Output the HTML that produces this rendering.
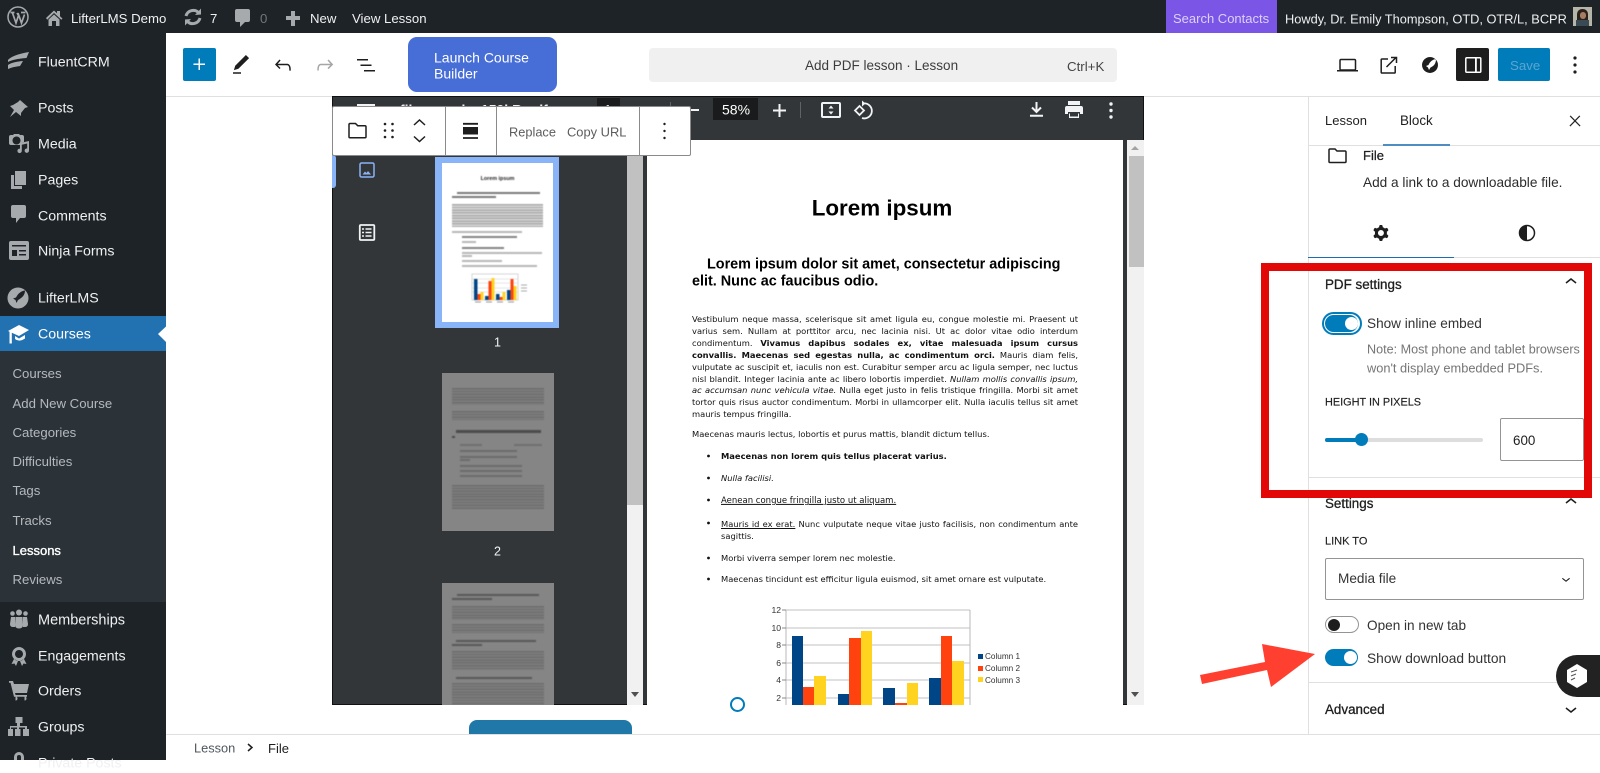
<!DOCTYPE html>
<html lang="en"><head><meta charset="utf-8"><title>Edit Lesson</title>
<style>
html,body{margin:0;padding:0;width:1600px;height:760px;overflow:hidden;background:#fff;font-family:"Liberation Sans",Arial,sans-serif;color:#1e1e1e}
.a{position:absolute}
.t{position:absolute;white-space:nowrap;line-height:1.2;transform:translateY(-50%)}
.ad{font-size:13.2px;color:#f0f0f1;top:19px}
.m{font-size:14.2px;color:#f0f0f1;left:38px}
.s{font-size:13.2px;color:#b4b9be;left:12.5px}
.r{font-size:13.6px;color:#1e1e1e}
.h{font-size:13.4px;color:#1e1e1e;-webkit-text-stroke:.3px #1e1e1e}
.p{font-family:"DejaVu Sans",sans-serif;font-size:8.35px;color:#111;left:692px}
.j{width:386px;white-space:normal;text-align:justify;text-align-last:justify}
.b{position:absolute;background:#333;opacity:.55}
.bl{filter:blur(.5px)}
</style></head><body>

<!-- admin bar -->
<div class="a" style="left:0;top:0;width:1600px;height:33px;background:#1d2327"></div>
<div class="a" style="left:1166px;top:0;width:111px;height:33px;background:#7b55e6"></div>
<div class="a" style="left:1573px;top:7px;width:19px;height:19px;background:#b7b4a8;overflow:hidden"><div class="a" style="left:4px;top:2px;width:11px;height:17px;border-radius:5px;background:#2a211d"></div><div class="a" style="left:6.500px;top:5px;width:6px;height:7px;border-radius:3px;background:#a87c62"></div><div class="a" style="left:3px;top:13px;width:13px;height:6px;background:#3a4a55"></div></div>

<!-- sidebar -->
<div class="a" style="left:0;top:33px;width:166px;height:727px;background:#1d2327"></div>
<div class="a" style="left:0;top:351px;width:166px;height:251px;background:#2c3338"></div>
<div class="a" style="left:0;top:316px;width:166px;height:35px;background:#2271b1"></div>

<!-- top bar/status lines -->
<div class="a" style="left:166px;top:96px;width:1434px;height:1px;background:#e0e0e0"></div>
<div class="a" style="left:166px;top:734px;width:1434px;height:1px;background:#e0e0e0"></div>
<div class="a" style="left:183px;top:48px;width:33px;height:33px;background:#007cba;border-radius:2px"></div>
<div class="a" style="left:408px;top:37px;width:149px;height:55px;background:#476dd6;border-radius:9px"></div>
<div class="a" style="left:649px;top:48px;width:468px;height:34px;background:#f0f0f0;border-radius:4px"></div>
<div class="a" style="left:1456px;top:48px;width:33px;height:33px;background:#1e1e1e;border-radius:2px"></div>
<div class="a" style="left:1498px;top:48px;width:52px;height:33px;background:#007cba;border-radius:2px"></div>

<!-- PDF frame -->
<div class="a" style="left:332px;top:96px;width:812px;height:609px;background:#323639;box-shadow:inset 0 0 0 1px #111"></div>
<div class="a" style="left:627px;top:140px;width:16px;height:565px;background:#f1f1f1"></div>
<div class="a" style="left:627px;top:156px;width:16px;height:349px;background:#c1c1c1"></div>
<div class="a" style="left:647px;top:140px;width:476px;height:565px;background:#fff"></div>
<div class="a" style="left:1127px;top:140px;width:17px;height:565px;background:#f1f1f1"></div>
<div class="a" style="left:1129px;top:156px;width:15px;height:111px;background:#c1c1c1"></div>
<div class="a" style="left:713px;top:98px;width:45px;height:22px;background:#191b1c"></div>
<div class="a" style="left:597px;top:98px;width:23px;height:22px;background:#191b1c"></div>
<div class="a" style="left:332px;top:155px;width:4px;height:33px;background:#8ab4f8;border-radius:0 3px 3px 0"></div>

<!-- thumb 1 -->
<div class="a" style="left:435px;top:157px;width:124px;height:171px;background:#8ab4f8"></div>
<div class="a" style="left:442px;top:163px;width:111px;height:159px;background:#fff;overflow:hidden">
  <div class="bl a" style="left:0;top:0;width:111px;height:159px">
  <div class="t" style="left:0;width:111px;text-align:center;top:16px;font-weight:bold;font-size:5.4px;color:#222">Lorem ipsum</div>
  <div class="b" style="left:15px;top:29px;width:83px;height:2px;opacity:.65"></div>
  <div class="b" style="left:10px;top:33px;width:44px;height:2px;opacity:.65"></div>
  <div class="b" style="left:10px;top:41px;width:91px;height:23px;background:repeating-linear-gradient(#aaa 0 1.4px,#d8d8d8 1.4px 2.75px);opacity:1"></div>
  <div class="b" style="left:10px;top:68px;width:70px;height:1.5px;opacity:.35"></div>
  <div class="b" style="left:20px;top:73px;width:55px;height:1.5px;opacity:.6"></div>
  <div class="b" style="left:20px;top:78px;width:14px;height:1.5px;opacity:.35"></div>
  <div class="b" style="left:20px;top:84px;width:42px;height:2px;opacity:.6"></div>
  <div class="b" style="left:20px;top:89px;width:80px;height:1.5px;opacity:.35"></div>
  <div class="b" style="left:20px;top:92px;width:10px;height:1.5px;opacity:.35"></div>
  <div class="b" style="left:20px;top:97px;width:40px;height:1.5px;opacity:.35"></div>
  <div class="b" style="left:20px;top:102px;width:75px;height:1.5px;opacity:.35"></div>
  <svg class="a" style="left:0;top:0" width="111" height="159" viewBox="0 0 111 159">
    <rect x="30" y="111" width="46" height="26" fill="#fff" stroke="#bbb" stroke-width=".6"/>
    <path d="M30 116h46M30 120h46M30 125h46M30 129h46" stroke="#ccc" stroke-width=".5"/>
    <g fill="#004586"><rect x="32" y="116" width="3.500" height="21"/><rect x="43" y="133" width="3.500" height="4"/><rect x="54" y="131" width="3.500" height="6"/><rect x="65" y="127" width="3.500" height="10"/></g>
    <g fill="#ff420e"><rect x="35.500" y="131" width="3" height="6"/><rect x="46.500" y="118" width="3" height="19"/><rect x="57.500" y="134" width="3" height="3"/><rect x="68.500" y="116" width="3" height="21"/></g>
    <g fill="#ffd320"><rect x="38.500" y="129" width="3" height="8"/><rect x="49.500" y="115" width="3" height="22"/><rect x="60.500" y="129" width="3" height="8"/><rect x="71.500" y="123" width="3" height="14"/></g>
    <path d="M33 139h6M44 139h6M55 139h6M66 139h6" stroke="#999" stroke-width="1"/>
    <path d="M79 122h6M79 125h6M79 128h6" stroke="#aaa" stroke-width="1"/>
  </svg>
  </div>
</div>
<div class="t" style="left:494px;top:343px;font-size:12.5px;color:#f1f3f4">1</div>

<!-- thumb 2 -->
<div class="a" style="left:442px;top:373px;width:112px;height:158px;background:#858585;overflow:hidden">
  <div class="bl a" style="left:0;top:0;width:112px;height:158px">
  <div class="b" style="left:10px;top:15px;width:92px;height:17px;background:repeating-linear-gradient(#6e6e6e 0 1.4px,#7d7d7d 1.4px 2.8px);opacity:1"></div>
  <div class="b" style="left:10px;top:38px;width:92px;height:9px;background:repeating-linear-gradient(#6e6e6e 0 1.4px,#7d7d7d 1.4px 2.8px);opacity:1"></div>
  <div class="b" style="left:14px;top:57px;width:85px;height:2.500px;opacity:.7"></div>
  <div class="b" style="left:10px;top:63px;width:3px;height:2px;opacity:.7"></div>
  <div class="b" style="left:18px;top:71px;width:22px;height:1.5px;opacity:.25"></div><div class="b" style="left:72px;top:71px;width:28px;height:1.5px;opacity:.25"></div>
  <div class="b" style="left:18px;top:77px;width:57px;height:1.5px;opacity:.3"></div>
  <div class="b" style="left:18px;top:83px;width:57px;height:1.5px;opacity:.3"></div>
  <div class="b" style="left:18px;top:86px;width:10px;height:1.5px;opacity:.3"></div>
  <div class="b" style="left:18px;top:92px;width:62px;height:1.5px;opacity:.3"></div>
  <div class="b" style="left:18px;top:97px;width:62px;height:1.5px;opacity:.3"></div>
  <div class="b" style="left:18px;top:102px;width:62px;height:1.5px;opacity:.3"></div>
  <div class="b" style="left:10px;top:112px;width:92px;height:24px;background:repeating-linear-gradient(#6e6e6e 0 1.4px,#7d7d7d 1.4px 2.8px);opacity:1"></div>
  </div>
</div>
<div class="t" style="left:494px;top:552px;font-size:12.5px;color:#f1f3f4">2</div>

<!-- thumb 3 -->
<div class="a" style="left:442px;top:583px;width:112px;height:122px;background:#858585;overflow:hidden">
  <div class="bl a" style="left:0;top:0;width:112px;height:122px">
  <div class="b" style="left:15px;top:11px;width:82px;height:2px"></div><div class="b" style="left:10px;top:15px;width:40px;height:2px"></div>
  <div class="b" style="left:10px;top:23px;width:92px;height:14px;background:repeating-linear-gradient(#6e6e6e 0 1.4px,#7d7d7d 1.4px 2.8px);opacity:1"></div>
  <div class="b" style="left:10px;top:41px;width:92px;height:9px;background:repeating-linear-gradient(#6e6e6e 0 1.4px,#7d7d7d 1.4px 2.8px);opacity:1"></div>
  <div class="b" style="left:14px;top:57px;width:80px;height:2px"></div><div class="b" style="left:10px;top:61px;width:30px;height:2px"></div>
  <div class="b" style="left:10px;top:68px;width:92px;height:19px;background:repeating-linear-gradient(#6e6e6e 0 1.4px,#7d7d7d 1.4px 2.8px);opacity:1"></div>
  <div class="b" style="left:14px;top:94px;width:76px;height:2px"></div>
  <div class="b" style="left:10px;top:100px;width:92px;height:22px;background:repeating-linear-gradient(#6e6e6e 0 1.4px,#7d7d7d 1.4px 2.8px);opacity:1"></div>
  </div>
</div>

<!-- PDF toolbar text (clipped beneath block toolbar) -->
<div class="t" style="left:400px;top:110px;font-size:14px;color:#f1f3f4;font-weight:bold">file-sample_150kB.pdf</div>
<div class="t" style="left:604px;top:110px;font-size:14px;color:#f1f3f4">1</div>
<div class="t" style="left:722px;top:110px;font-size:14px;color:#fff">58%</div>

<!-- PDF page -->
<div class="t" style="left:647px;width:470px;text-align:center;top:209px;font-size:22.4px;font-weight:bold;color:#000">Lorem ipsum</div>
<div class="t" style="left:707px;top:265px;font-size:14.4px;font-weight:bold;color:#000">Lorem ipsum dolor sit amet, consectetur adipiscing</div>
<div class="t" style="left:692px;top:282px;font-size:14.4px;font-weight:bold;color:#000">elit. Nunc ac faucibus odio.</div>

<div class="t p j" style="top:319px">Vestibulum neque massa, scelerisque sit amet ligula eu, congue molestie mi. Praesent ut</div>
<div class="t p j" style="top:331px">varius sem. Nullam at porttitor arcu, nec lacinia nisi. Ut ac dolor vitae odio interdum</div>
<div class="t p j" style="top:343px">condimentum. <b>Vivamus dapibus sodales ex, vitae malesuada ipsum cursus</b></div>
<div class="t p j" style="top:355px"><b>convallis. Maecenas sed egestas nulla, ac condimentum orci.</b> Mauris diam felis,</div>
<div class="t p j" style="top:367px">vulputate ac suscipit et, iaculis non est. Curabitur semper arcu ac ligula semper, nec luctus</div>
<div class="t p j" style="top:379px">nisl blandit. Integer lacinia ante ac libero lobortis imperdiet. <i>Nullam mollis convallis ipsum,</i></div>
<div class="t p j" style="top:390px"><i>ac accumsan nunc vehicula vitae.</i> Nulla eget justo in felis tristique fringilla. Morbi sit amet</div>
<div class="t p j" style="top:402px">tortor quis risus auctor condimentum. Morbi in ullamcorper elit. Nulla iaculis tellus sit amet</div>
<div class="t p" style="top:414px">mauris tempus fringilla.</div>
<div class="t p" style="top:434px">Maecenas mauris lectus, lobortis et purus mattis, blandit dictum tellus.</div>
<div class="t p" style="left:721px;top:456px"><b>Maecenas non lorem quis tellus placerat varius.</b></div>
<div class="t p" style="left:721px;top:478px"><i>Nulla facilisi.</i></div>
<div class="t p" style="left:721px;top:501px;font-size:8.5px"><u>Aenean congue fringilla justo ut aliquam. </u></div>
<div class="t p" style="left:721px;top:524px;width:357px;white-space:normal;text-align:justify;text-align-last:justify"><u>Mauris id ex erat.</u> Nunc vulputate neque vitae justo facilisis, non condimentum ante</div>
<div class="t p" style="left:721px;top:536px">sagittis.</div>
<div class="t p" style="left:721px;top:558px">Morbi viverra semper lorem nec molestie.</div>
<div class="t p" style="left:721px;top:579px">Maecenas tincidunt est efficitur ligula euismod, sit amet ornare est vulputate.</div>

<svg class="a" style="left:0;top:0" width="1600" height="760" viewBox="0 0 1600 760">
  <!-- bullets -->
  <g fill="#111"><circle cx="708.5" cy="456" r="1.4"/><circle cx="708.5" cy="478" r="1.4"/><circle cx="708.5" cy="500" r="1.4"/><circle cx="708.5" cy="523" r="1.4"/><circle cx="708.5" cy="558" r="1.4"/><circle cx="708.5" cy="579" r="1.4"/></g>
  <!-- chart -->
  <path d="M786 610H970M786 628H970M786 645H970M786 663H970M786 680H970M786 698H970" stroke="#c0c0c0" stroke-width="1"/>
  <path d="M786 610V705M970 610V705" stroke="#b8b8b8" stroke-width="1"/>
  <path d="M782 610H786M782 628H786M782 645H786M782 663H786M782 680H786M782 698H786" stroke="#888"/>
  <g fill="#004586"><rect x="792" y="636" width="11" height="69"/><rect x="838" y="694" width="11" height="11"/><rect x="883" y="688" width="12" height="17"/><rect x="929" y="678" width="12" height="27"/></g>
  <g fill="#ff420e"><rect x="803" y="687" width="11" height="18"/><rect x="849" y="638" width="12" height="67"/><rect x="895" y="703" width="12" height="2"/><rect x="941" y="636" width="11" height="69"/></g>
  <g fill="#ffd320"><rect x="814" y="676" width="12" height="29"/><rect x="861" y="631" width="11" height="74"/><rect x="907" y="683" width="11" height="22"/><rect x="952" y="661" width="12" height="44"/></g>
  <g font-family="Liberation Sans" font-size="8.6" fill="#333" text-anchor="end"><text x="781" y="613">12</text><text x="781" y="631">10</text><text x="781" y="648">8</text><text x="781" y="666">6</text><text x="781" y="683">4</text><text x="781" y="701">2</text></g>
  <rect x="978" y="654" width="5" height="5" fill="#004586"/><rect x="978" y="666" width="5" height="5" fill="#ff420e"/><rect x="978" y="677" width="5" height="5" fill="#ffd320"/>
  <g font-family="Liberation Sans" font-size="8.2" fill="#333"><text x="985" y="659">Column 1</text><text x="985" y="671">Column 2</text><text x="985" y="683">Column 3</text></g>
  <!-- scrollbar arrows -->
  <path d="M631 150l4-5 4 5zM631 692l4 5 4-5z" fill="#505050"/>
  <path d="M1131 150l4-4 4 4z" fill="#a3a3a3"/>
  <path d="M1131 692l4 5 4-5z" fill="#505050"/>
  <!-- PDF toolbar icons -->
  <path d="M357 105h18M357 110h18" stroke="#f1f3f4" stroke-width="2"/>
  <rect x="690" y="109" width="9" height="2" fill="#f1f3f4"/>
  <path d="M773 110.500h13M779.500 104v13" stroke="#f1f3f4" stroke-width="2"/>
  <path d="M670.500 102v16M800.500 102v16" stroke="#5f6368"/>
  <rect x="822" y="103" width="18" height="14" rx="1" fill="none" stroke="#f1f3f4" stroke-width="2"/>
  <path d="M828.500 108.500l2.500-3 2.500 3zM828.500 111.500l2.500 3 2.500-3z" fill="#f1f3f4"/>
  <g fill="none" stroke="#f1f3f4" stroke-width="1.800"><path d="M855 110.500l4.500-4.500 4.500 4.500-4.500 4.500z"/><path d="M863 103.500a7.500 7.500 0 1 1-1 14.500"/></g>
  <path d="M862 100.500l3.500 3-3.500 3z" fill="#f1f3f4"/>
  <path d="M1036.500 102v9M1032 107.500l4.500 4.500 4.500-4.500M1030 115.800h13" fill="none" stroke="#f1f3f4" stroke-width="2"/>
  <path d="M1068 101h12v4h-12zM1067 106h14a2 2 0 0 1 2 2v6h-3v-2h-12v2h-3v-6a2 2 0 0 1 2-2zM1069 113.500h10v4.500h-10z" fill="#f1f3f4"/>
  <rect x="1070" y="113" width="8" height="3.500" fill="#323639"/>
  <g fill="#f1f3f4"><circle cx="1111" cy="104" r="1.700"/><circle cx="1111" cy="110.500" r="1.700"/><circle cx="1111" cy="117" r="1.700"/></g>
  <!-- pdf side icons -->
  <rect x="360" y="163" width="14" height="14" rx="1.500" fill="none" stroke="#8ab4f8" stroke-width="1.500"/>
  <path d="M362.500 174.500l2.500-3 1.500 1.500 1.500-2 3 3.500z" fill="#8ab4f8"/>
  <rect x="359.800" y="225" width="14.500" height="15" rx="1" fill="none" stroke="#f1f3f4" stroke-width="1.800"/>
  <path d="M362 229h2M365.500 229h6M362 232.500h2M365.500 232.500h6M362 236h2M365.500 236h6" stroke="#f1f3f4" stroke-width="1.500"/>
</svg>

<!-- spinner & button peek -->
<div class="a" style="left:469px;top:720px;width:163px;height:14px;background:#1f78a8;border-radius:8px 8px 0 0"></div>
<div class="a" style="left:730px;top:697px;width:11px;height:11px;border:2.500px solid #007cba;border-radius:50%;background:#fff;box-sizing:content-box"></div>

<!-- block toolbar -->
<div class="a" style="left:332px;top:106px;width:357px;height:48px;background:#fff;border:1px solid #8a8a8a;border-radius:2px"></div>
<div class="a" style="left:445px;top:106px;width:1px;height:50px;background:#8a8a8a"></div>
<div class="a" style="left:496px;top:106px;width:1px;height:50px;background:#8a8a8a"></div>
<div class="a" style="left:639px;top:106px;width:1px;height:50px;background:#8a8a8a"></div>
<div class="t" style="left:509px;top:131.500px;font-size:12.800px;color:#5c5c5c">Replace</div>
<div class="t" style="left:567px;top:131.500px;font-size:12.900px;color:#5c5c5c">Copy URL</div>

<!-- admin text -->
<div class="t ad" style="left:71px">LifterLMS Demo</div>
<div class="t ad" style="left:210px">7</div>
<div class="t ad" style="left:260px;color:#70777c">0</div>
<div class="t ad" style="left:310px">New</div>
<div class="t ad" style="left:352px">View Lesson</div>
<div class="t ad" style="left:1173px;color:#dcd2fa;font-size:13px">Search Contacts</div>
<div class="t ad" style="left:1285px;font-size:12.800px">Howdy, Dr. Emily Thompson, OTD, OTR/L, BCPR</div>

<!-- sidebar text -->
<div class="t m" style="top:63px">FluentCRM</div>
<div class="t m" style="top:109px">Posts</div>
<div class="t m" style="top:145px">Media</div>
<div class="t m" style="top:181px">Pages</div>
<div class="t m" style="top:217px">Comments</div>
<div class="t m" style="top:252px">Ninja Forms</div>
<div class="t m" style="top:299px">LifterLMS</div>
<div class="t m" style="top:335px;color:#fff">Courses</div>
<div class="t s" style="top:374px">Courses</div>
<div class="t s" style="top:404px">Add New Course</div>
<div class="t s" style="top:433px">Categories</div>
<div class="t s" style="top:462px">Difficulties</div>
<div class="t s" style="top:491px">Tags</div>
<div class="t s" style="top:521px">Tracks</div>
<div class="t s" style="top:551px;color:#fff;font-size:13px;-webkit-text-stroke:.35px #fff">Lessons</div>
<div class="t s" style="top:580px">Reviews</div>
<div class="t m" style="top:621px;font-size:14.500px">Memberships</div>
<div class="t m" style="top:657px">Engagements</div>
<div class="t m" style="top:692px">Orders</div>
<div class="t m" style="top:728px">Groups</div>
<div class="t m" style="top:764px">Private Posts</div>

<!-- top bar text -->
<div class="t" style="left:434px;top:58px;font-size:14px;color:#fff">Launch Course</div>
<div class="t" style="left:434px;top:73.500px;font-size:14px;color:#fff">Builder</div>
<div class="t" style="left:805px;top:66px;font-size:13.500px;color:#3c3c3c">Add PDF lesson · Lesson</div>
<div class="t" style="left:1067px;top:67px;font-size:13.300px;color:#444">Ctrl+K</div>
<div class="t" style="left:1510px;top:66px;font-size:13.300px;color:#5aa5cf">Save</div>

<!-- status -->
<div class="t" style="left:194px;top:748px;font-size:12.800px;color:#50575e">Lesson</div>
<div class="t" style="left:268px;top:749px;font-size:13px;color:#1e1e1e">File</div>

<!-- right sidebar -->
<div class="a" style="left:1308px;top:97px;width:1px;height:637px;background:#e0e0e0"></div>
<div class="a" style="left:1309px;top:145px;width:291px;height:1px;background:#e0e0e0"></div>
<div class="a" style="left:1383px;top:144px;width:67px;height:2px;background:#4f8cc0"></div>
<div class="a" style="left:1309px;top:257px;width:291px;height:1px;background:#e0e0e0"></div>
<div class="a" style="left:1308px;top:256.500px;width:146px;height:1.500px;background:#1e6bb0"></div>
<div class="a" style="left:1308px;top:477px;width:292px;height:1px;background:#e0e0e0"></div>
<div class="a" style="left:1308px;top:682px;width:292px;height:1px;background:#e0e0e0"></div>

<div class="t r" style="left:1325px;top:121px;font-size:13px">Lesson</div>
<div class="t r" style="left:1400px;top:121px;font-size:13.400px">Block</div>
<div class="t r" style="left:1363px;top:156px;font-size:13px;-webkit-text-stroke:.25px #1e1e1e">File</div>
<div class="t r" style="left:1363px;top:183px;font-size:13.650px;color:#2c2c2c">Add a link to a downloadable file.</div>

<div class="t h" style="left:1325px;top:285px">PDF settings</div>
<div class="t r" style="left:1367px;top:324px;color:#333">Show inline embed</div>
<div class="t r" style="left:1367px;top:350px;font-size:12.600px;color:#757575">Note: Most phone and tablet browsers</div>
<div class="t r" style="left:1367px;top:368px;font-size:12.800px;color:#757575">won't display embedded PDFs.</div>
<div class="t r" style="left:1325px;top:403px;font-size:10.900px;-webkit-text-stroke:.15px #1e1e1e">HEIGHT IN PIXELS</div>
<div class="a" style="left:1325px;top:437.500px;width:158px;height:4px;background:#ddd;border-radius:2px"></div>
<div class="a" style="left:1325px;top:437.500px;width:36px;height:4px;background:#007cba;border-radius:2px"></div>
<div class="a" style="left:1355px;top:433px;width:13px;height:13px;background:#007cba;border-radius:50%"></div>
<div class="a" style="left:1500px;top:418px;width:82px;height:41px;border:1px solid #949494;border-radius:2px;background:#fff"></div>
<div class="t r" style="left:1513px;top:441px;font-size:13.400px">600</div>

<div class="t h" style="left:1325px;top:504px">Settings</div>
<div class="t r" style="left:1325px;top:542px;font-size:11px;-webkit-text-stroke:.15px #1e1e1e">LINK TO</div>
<div class="a" style="left:1325px;top:558px;width:257px;height:40px;border:1px solid #949494;border-radius:2px;background:#fff"></div>
<div class="t r" style="left:1338px;top:579px;color:#333">Media file</div>
<div class="t r" style="left:1367px;top:626px;color:#333">Open in new tab</div>
<div class="t r" style="left:1367px;top:659px;color:#333;font-size:13.750px">Show download button</div>
<div class="t h" style="left:1325px;top:710px">Advanced</div>

<!-- toggles -->
<div class="a" style="left:1322px;top:312px;width:36px;height:19px;border:2px solid #007cba;border-radius:12px;background:#fff"></div>
<div class="a" style="left:1325px;top:315px;width:33px;height:17px;background:#007cba;border-radius:9px"></div>
<div class="a" style="left:1344.500px;top:317px;width:13px;height:13px;background:#fff;border-radius:50%"></div>
<div class="a" style="left:1325px;top:616px;width:32px;height:15px;border:1px solid #949494;border-radius:9px;background:#fff"></div>
<div class="a" style="left:1327.500px;top:618.500px;width:12px;height:12px;background:#1e1e1e;border-radius:50%"></div>
<div class="a" style="left:1325px;top:649px;width:33px;height:17px;background:#007cba;border-radius:9px"></div>
<div class="a" style="left:1344px;top:651px;width:13px;height:13px;background:#fff;border-radius:50%"></div>

<!-- red box -->
<div class="a" style="left:1261px;top:263px;width:315px;height:219px;border:8px solid #e30808"></div>

<!-- widget -->
<div class="a" style="left:1556px;top:655px;width:44px;height:42px;background:#222;border-radius:21px 0 0 21px"></div>

<!-- icon layer -->
<svg class="a" style="left:0;top:0" width="1600" height="760" viewBox="0 0 1600 760">
  <!-- admin icons -->
  <circle cx="18" cy="17" r="10" fill="none" stroke="#a7aaad" stroke-width="1.500"/>
  <path d="M10.500 12.500h4M21 12.500h4.500M12.500 13l3.500 10 2.500-7.500-1.500-2.500M18 13l3.500 10 3-8.500" fill="none" stroke="#a7aaad" stroke-width="1.700"/>
  <path d="M46 18l8-7.500 3 2.800V11h3v5.200l2.500 2.300-1.200 1.200L54 13l-6.800 6.700zM48.500 19.500L54 14.500l5.500 5V26H56v-5h-4v5h-3.500z" fill="#a7aaad"/>
  <path d="M186 16a7.500 7.500 0 0 1 12.500-3.500M200 18a7.500 7.500 0 0 1-12.500 3.500" fill="none" stroke="#a7aaad" stroke-width="3"/>
  <path d="M195 15l6-.5v-6zM191 19l-6 .5v6z" fill="#a7aaad"/>
  <path d="M237 9h11a2 2 0 0 1 2 2v9a2 2 0 0 1-2 2h-3l-5 5v-5h-3a2 2 0 0 1-2-2v-9a2 2 0 0 1 2-2z" fill="#a7aaad"/>
  <path d="M291 11h4v5h5v4h-5v6h-4v-6h-5v-4h5z" fill="#a7aaad"/>

  <!-- sidebar icons -->
  <g fill="#a7aaad">
    <path d="M8 60q4-5 21-8l-2.500 6q-13 1-18.500 4zM8 65q4-3 15-4l-3 5q-8 1-12 3z"/>
    <path d="M20 100l8 7-3 1-4 5v3l-5-4-6 5 4-7-4-4 3-1 5-3z"/>
    <path d="M9 137a2 2 0 0 1 2-2h2l1-1h5l1 1h2a2 2 0 0 1 2 2v5l-4 1v2h-9a2 2 0 0 1-2-2zM16.500 136.500a4 4 0 1 0 .01 0zM20 146v-3l9-2v9.500a2.200 2.200 0 1 1-1.800-2v-5l-5.400 1.200v6a2.200 2.200 0 1 1-1.800-2z" fill-rule="evenodd"/>
    <path d="M15 171h11v14H15zM11 175h3v11h8v3H11z"/>
    <path d="M13 205h11a2 2 0 0 1 2 2v9a2 2 0 0 1-2 2h-4l-4 5v-5h-3a2 2 0 0 1-2-2v-9a2 2 0 0 1 2-2z"/>
    <path d="M11 241h16a2 2 0 0 1 2 2v15a2 2 0 0 1-2 2H11a2 2 0 0 1-2-2v-15a2 2 0 0 1 2-2zM12 250v6h5v-6zM19 250v1.500h7V250zM19 254v1.500h7V254zM12 245v1.500h14V245z" fill-rule="evenodd"/>
    <path d="M18 287.500a10.500 10.500 0 1 0 .01 0zM25 290.500c-4 .5-7 3-9 7l-3 1 2.500 1.500 1 3 1.500-3c4-2 7-5 7-9.500z" fill-rule="evenodd"/>
    <circle cx="12.500" cy="613.500" r="2.300"/><circle cx="19" cy="612.500" r="3"/><circle cx="25.500" cy="613.500" r="2.300"/>
    <path d="M11 617h4v10h-2q-3 0-3-3zM23 617h4l1 7q0 3-3 3h-2zM15.500 617h7l.5 8q0 3.500-4 3.500t-4-3.500z"/>
    <path d="M19 647a7 7 0 1 0 .01 0zM19 650a4 4 0 1 0 .01 0zM14 659l-2.500 5 3-.5 1.500 2.500 2-5zM24 659l2.500 5-3-.5-1.500 2.500-2-5z" fill-rule="evenodd"/>
    <path d="M9 681h4l1 3h15l-2 9H15l.6 2H27v1.800H14l-3.500-14H9zM15.500 696.500a2 2 0 1 1-.01 4zM24.500 696.500a2 2 0 1 1-.01 4z"/>
    <path d="M15.500 717h7v6h-2.500v3h7v3h2v7h-6v-7h2v-1.500h-6v1.500h1.500v7h-5.500v-7h2v-1.500h-6v1.500h2v7H8v-7h2v-3h7v-3h-1.500z"/>
    <path d="M19 752a5 5 0 0 0-5 5v3h3v-3a2 2 0 0 1 4 0v3h3v-3a5 5 0 0 0-5-5z"/>
  </g>
  <path d="M8 331l11-6 10 5-10 6zM15 336l4 2.500 6-3.500v3.500q-6 4-10 .5zM9.500 331.500h2.300v12H9.500z" fill="#fff"/>
  <path d="M166 326.500l-8 7.500 8 8z" fill="#fff"/>

  <!-- editor top bar -->
  <path transform="translate(187.500,52.500)" d="M11 12.500V17.500H12.500V12.500H17.500V11H12.500V6H11V11H6V12.500H11Z" fill="#fff"/>
  <path transform="translate(229,53)" d="M20.100 5.100L16.900 2 6.200 12.700l-1.300 4.400 4.500-1.300L20.100 5.100zM4 20.800h8v-1.500H4v1.500z" fill="#1e1e1e"/>
  <path transform="translate(271,53)" d="M18.300 11.700c-.6-.6-1.400-.9-2.300-.9H6.700l2.900-3.300-1.100-1-4.500 5L8.500 16l1-1-2.700-2.700H16c.5 0 .9.2 1.300.5 1 1 1 3.400 1 4.500v.3h1.500v-.2c0-1.500 0-4.300-1.500-5.700z" fill="#1e1e1e"/>
  <path transform="translate(313,53)" d="M15.600 6.500l-1.100 1 2.900 3.300H8c-.9 0-1.700.3-2.300.9-1.400 1.500-1.400 4.200-1.400 5.600v.2h1.500v-.3c0-1.100 0-3.500 1-4.500.3-.3.7-.5 1.300-.5h9.200L14.500 15l1.100 1.100 4.600-4.600-4.600-5z" fill="#a6a6a6"/>
  <path transform="translate(354,53)" d="M3 6h11v1.500H3V6zm3.500 5.500h11V13h-11v-1.500zM21 17H10v1.500h11V17z" fill="#1e1e1e"/>

  <!-- right top icons -->
  <rect x="1340" y="59.500" width="15.500" height="10.500" rx="1" fill="none" stroke="#1e1e1e" stroke-width="1.500"/>
  <path d="M1337 70.800h21" stroke="#1e1e1e" stroke-width="1.500"/>
  <path d="M1388 59h-6a.8.8 0 0 0-.8.8v12.400a.8.8 0 0 0 .8.8h12.400a.8.8 0 0 0 .8-.8V66M1386.500 67l9.500-9.500M1391 57.500h5.500v5.500" fill="none" stroke="#1e1e1e" stroke-width="1.500"/>
  <path d="M1430 57a8 8 0 1 0 .01 0zM1436 59c-3.500.5-6 2.500-7.500 6l-2.500 1 2 1.500 1 2.500 1.500-2.500c3.500-1.500 5.500-4 5.500-8.500z" fill="#1e1e1e" fill-rule="evenodd"/>
  <rect x="1465.800" y="57.800" width="15" height="14.500" rx="1" fill="none" stroke="#fff" stroke-width="1.500"/>
  <rect x="1475" y="58" width="1.800" height="14" fill="#fff"/>
  <g fill="#1e1e1e"><circle cx="1575" cy="58" r="1.600"/><circle cx="1575" cy="65" r="1.600"/><circle cx="1575" cy="72" r="1.600"/></g>

  <!-- block toolbar icons -->
  <path d="M349 124.500a1 1 0 0 1 1-1h5.500l2.200 2.200h7.300a1 1 0 0 1 1 1v10a1 1 0 0 1-1 1h-15a1 1 0 0 1-1-1z" fill="none" stroke="#1e1e1e" stroke-width="1.500"/>
  <g fill="#1e1e1e"><circle cx="385" cy="124" r="1.300"/><circle cx="392.500" cy="124" r="1.300"/><circle cx="385" cy="130.500" r="1.300"/><circle cx="392.500" cy="130.500" r="1.300"/><circle cx="385" cy="137" r="1.300"/><circle cx="392.500" cy="137" r="1.300"/></g>
  <path d="M414 125l5.500-5 5.500 5M414 136.500l5.500 5 5.500-5" fill="none" stroke="#1e1e1e" stroke-width="1.500"/>
  <path d="M463 123.800h15M463 138h15" stroke="#1e1e1e" stroke-width="1.800"/>
  <rect x="463" y="127" width="15" height="7.500" fill="#1e1e1e"/>
  <g fill="#1e1e1e"><circle cx="664.500" cy="124" r="1.200"/><circle cx="664.500" cy="131" r="1.200"/><circle cx="664.500" cy="138" r="1.200"/></g>

  <!-- sidebar icons right -->
  <path transform="translate(1575,121) scale(.72) translate(-12,-12)" d="M13 11.800l6.100-6.300-1-1-6.100 6.200-6.100-6.200-1 1 6.100 6.300-6.500 6.700 1 1 6.500-6.600 6.500 6.600 1-1z" fill="#1e1e1e" stroke="#1e1e1e" stroke-width=".3"/>
  <path d="M1329 150a1 1 0 0 1 1-1h5l2 2h8a1 1 0 0 1 1 1v9.500a1 1 0 0 1-1 1h-15a1 1 0 0 1-1-1z" fill="none" stroke="#1e1e1e" stroke-width="1.500"/>
  <path transform="translate(1369,221)" fill-rule="evenodd" d="M10.289 4.836A1 1 0 0 1 11.275 4h1.306a1 1 0 0 1 .987.836l.244 1.466c.787.26 1.503.679 2.108 1.218l1.393-.522a1 1 0 0 1 1.216.437l.653 1.130a1 1 0 0 1-.23 1.273l-1.148.944a6.025 6.025 0 0 1 0 2.435l1.149.946a1 1 0 0 1 .23 1.272l-.653 1.130a1 1 0 0 1-1.216.437l-1.394-.522c-.605.54-1.320.958-2.108 1.218l-.244 1.466a1 1 0 0 1-.987.836h-1.306a1 1 0 0 1-.986-.836l-.244-1.466a5.995 5.995 0 0 1-2.108-1.218l-1.394.522a1 1 0 0 1-1.217-.436l-.653-1.131a1 1 0 0 1 .23-1.272l1.149-.946a6.026 6.026 0 0 1 0-2.435l-1.148-.944a1 1 0 0 1-.23-1.272l.653-1.131a1 1 0 0 1 1.217-.437l1.393.522a5.994 5.994 0 0 1 2.108-1.218l.244-1.466zM14.929 12a3 3 0 1 1-6 0 3 3 0 0 1 6 0z" fill="#1e1e1e"/>
  <circle cx="1527" cy="233" r="7.500" fill="none" stroke="#1e1e1e" stroke-width="1.500"/>
  <path d="M1527 225.500a7.500 7.500 0 0 0 0 15z" fill="#1e1e1e"/>
  <path transform="translate(1559,270)" d="M6.500 12.400L12 8l5.500 4.400-.9 1.200L12 10l-4.500 3.600-1-1.200z" fill="#1e1e1e"/>
  <path transform="translate(1559,490)" d="M6.500 12.400L12 8l5.500 4.400-.9 1.200L12 10l-4.500 3.600-1-1.200z" fill="#1e1e1e"/>
  <path transform="translate(1566,579) scale(.72) translate(-12,-12)" d="M17.500 11.600L12 16l-5.500-4.400.9-1.200L12 14l4.500-3.600 1 1.200z" fill="#1e1e1e"/>
  <path transform="translate(1559,697)" d="M17.500 11.600L12 16l-5.500-4.400.9-1.200L12 14l4.500-3.600 1 1.200z" fill="#1e1e1e"/>
  <!-- breadcrumb chevron -->
  <path d="M248 744l4 3.500-4 3.500" fill="none" stroke="#1e1e1e" stroke-width="1.500"/>
  <!-- red arrow -->
  <path d="M1200 675L1265 662 1262 644 1315 654 1271 687 1267 670 1202 684Z" fill="#ff4030"/>
  <!-- widget hexagon -->
  <path d="M1577 664l10 6v12l-10 6-10-6v-12z" fill="#fff"/>
  <path d="M1571 672l6-2M1571 676l5-2M1571 680l4-2" stroke="#555" stroke-width="1"/>
</svg>
</body></html>
